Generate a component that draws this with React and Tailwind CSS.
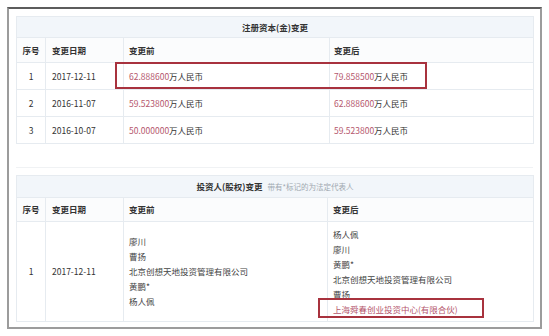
export default function App() {
  const font = { fontFamily: '"Microsoft YaHei", "Noto Sans CJK SC", sans-serif' };

  const capital = [
    { no: 1, date: "2017-12-11", before: "62.888600", after: "79.858500" },
    { no: 2, date: "2016-11-07", before: "59.523800", after: "62.888600" },
    { no: 3, date: "2016-10-07", before: "50.000000", after: "59.523800" },
  ];

  const before = ["廖川", "曹扬", "北京创想天地投资管理有限公司", "黄鹏*", "杨人佩"];
  const after = ["杨人佩", "廖川", "黄鹏*", "北京创想天地投资管理有限公司", "曹扬"];

  return (
    <div className="w-[549px] h-[336px] bg-white pt-[7px] pl-[7px]" style={font}>
      <div className="relative w-[535px] h-[322px] border-2 border-[#9c9c9c] border-t-[#5c5c5c] bg-white px-[7px] pt-[7px] pb-[7px] text-[8.5px] text-[#333]">
        {/* 注册资本 */}
        <div className="pb-[23px] border-b border-[#f0f2f4]">
          <table className="w-[517px] table-fixed border-collapse">
            <colgroup>
              <col className="w-[29px]" />
              <col className="w-[78px]" />
              <col className="w-[206px]" />
              <col className="w-[204px]" />
            </colgroup>
            <tbody>
              <tr className="h-[21px] bg-[#f2f6fa]">
                <td colSpan={4} className="border border-[#e6ebf0] text-center font-bold text-[#333]">
                  注册资本(金)变更
                </td>
              </tr>
              <tr className="h-[25px] bg-[#fbfcfd] font-bold">
                <td className="border border-[#e6ebf0] text-center">序号</td>
                <td className="border border-[#e6ebf0] pl-[6px]">变更日期</td>
                <td className="border border-[#e6ebf0] pl-[5px]">变更前</td>
                <td className="border border-[#e6ebf0] pl-[4px]">变更后</td>
              </tr>
              {capital.map(r => (
                <tr key={r.no} className="h-[27px]">
                  <td className="border border-[#e6ebf0] text-center">{r.no}</td>
                  <td className="border border-[#e6ebf0] pl-[6px]">{r.date}</td>
                  <td className="border border-[#e6ebf0] pl-[5px]">
                    <span className="text-[#b5576d]">{r.before}</span>万人民币
                  </td>
                  <td className="border border-[#e6ebf0] pl-[4px]">
                    <span className="text-[#b5576d]">{r.after}</span>万人民币
                  </td>
                </tr>
              ))}
            </tbody>
          </table>
        </div>

        {/* 投资人 */}
        <div className="pt-[7px]">
          <table className="w-[517px] table-fixed border-collapse">
            <colgroup>
              <col className="w-[29px]" />
              <col className="w-[78px]" />
              <col className="w-[204px]" />
              <col className="w-[206px]" />
            </colgroup>
            <tbody>
              <tr className="h-[22px] bg-[#f2f6fa]">
                <td colSpan={4} className="border border-[#e6ebf0] text-center">
                  <span className="font-bold">投资人(股权)变更</span>
                  <span className="ml-[5px] text-[7.5px] text-[#a0a8b0]">带有*标记的为法定代表人</span>
                </td>
              </tr>
              <tr className="h-[24px] bg-[#fbfcfd] font-bold">
                <td className="border border-[#e6ebf0] text-center">序号</td>
                <td className="border border-[#e6ebf0] pl-[6px]">变更日期</td>
                <td className="border border-[#e6ebf0] pl-[5px]">变更前</td>
                <td className="border border-[#e6ebf0] pl-[5px]">变更后</td>
              </tr>
              <tr className="h-[100px]">
                <td className="border border-[#e6ebf0] text-center">1</td>
                <td className="border border-[#e6ebf0] pl-[6px]">2017-12-11</td>
                <td className="border border-[#e6ebf0] pl-[5px] leading-[15px] text-[#444]">
                  {before.map(n => <div key={n}>{n}</div>)}
                </td>
                <td className="border border-[#e6ebf0] pl-[5px] leading-[15px] text-[#444]">
                  {after.map(n => <div key={n}>{n}</div>)}
                  <div className="text-[#b5576d]">上海舜春创业投资中心(有限合伙)</div>
                </td>
              </tr>
            </tbody>
          </table>
        </div>

        {/* 标注框 */}
        <div className="absolute left-[106px] top-[53px] w-[312px] h-[27px] border-2 border-[#a8323e]" />
        <div className="absolute left-[309px] top-[289px] w-[166px] h-[20px] border-2 border-[#a8323e]" />
      </div>
    </div>
  );
}
